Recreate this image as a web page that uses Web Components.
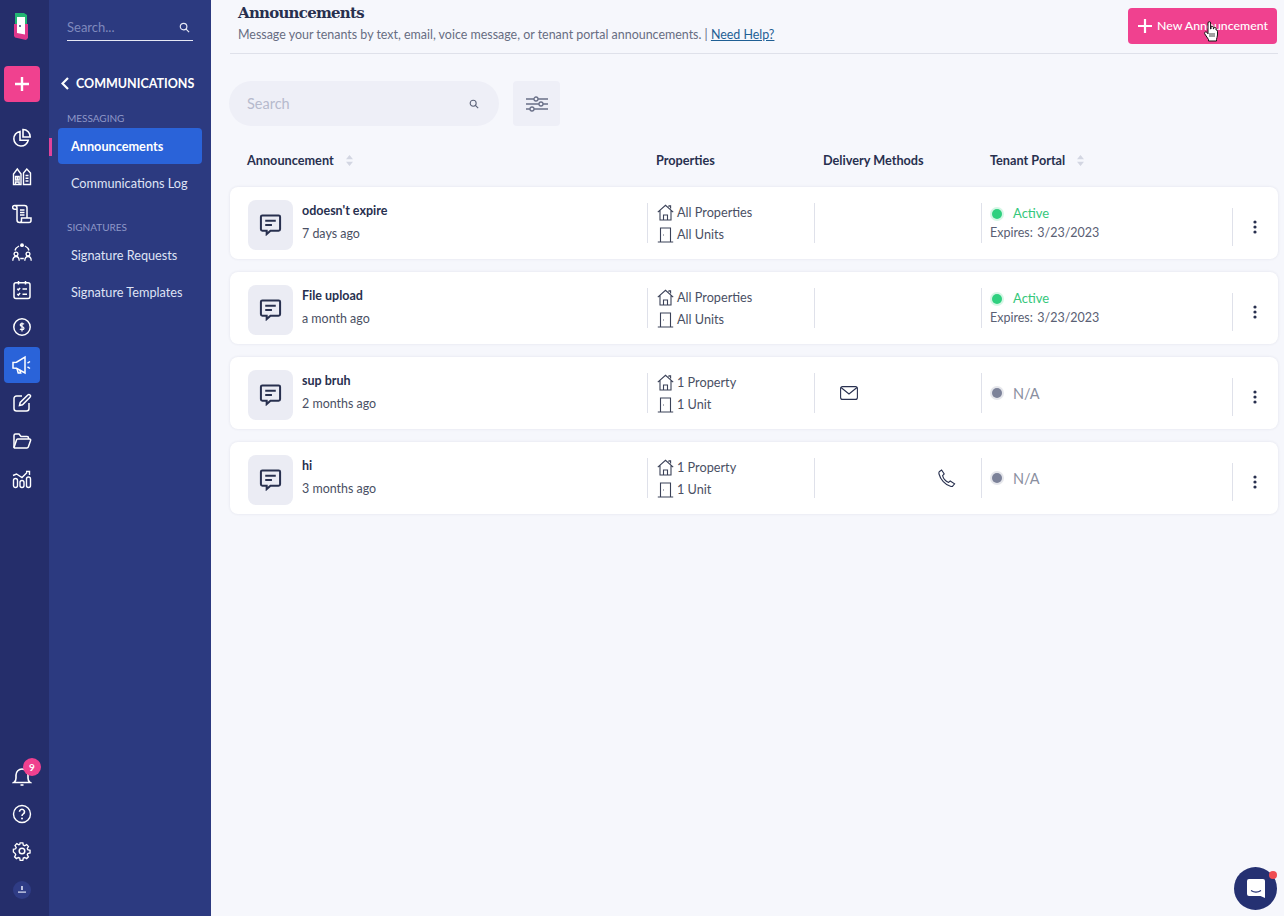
<!DOCTYPE html>
<html>
<head>
<meta charset="utf-8">
<title>Announcements</title>
<style>
  html, body { margin: 0; height: 100%; }
  body { font-family: Lato, "Noto Sans", sans-serif; background: #f6f7fc; overflow: hidden; }
  svg { display: block; }
  a { color: #1f5f94; }
</style>
</head>
<body>
<app-shell>
  <icon-rail slot="rail">
    <rail-item><svg width="20" height="20" viewBox="0 0 20 20" fill="none" stroke="#fff" stroke-width="1.600"><path d="M8 3.500a7.300 7.300 0 1 0 8.300 8.700H8z"/><path d="M11 1.500a7.200 7.200 0 0 1 7.200 7.500H11z"/></svg></rail-item>
    <rail-item><svg width="20" height="20" viewBox="0 0 20 20" fill="none" stroke="#fff" stroke-width="1.400"><path d="M1.500 18.500V8L5.300 3 9 8v10.500z"/><path d="M11.500 18.500V7l3.300-4L18.500 7v11.500z"/><path d="M3.500 10.500h3.600v3.500H3.500zM5.300 10.500V14M3.500 18v-2h3.600v2M13.500 9.500h3M13.500 12.200h3M13.500 15h3"/></svg></rail-item>
    <rail-item><svg width="20" height="20" viewBox="0 0 20 20" fill="none" stroke="#fff" stroke-width="1.500"><path d="M2.500 1.500h10A2.500 2.500 0 0 1 15 4v9.500M2.500 1.500A1.800 1.800 0 0 0 2.500 5.200H5V16a2.500 2.500 0 0 0 2.500 2.500H17a2 2 0 0 0 2-2V14H9.500v2.500a2 2 0 0 1-2 2M2.500 1.500A2.500 2.500 0 0 1 5 4v1.200"/><path d="M8 6h4.500M8 8.500h4.500M8 11h4.500"/></svg></rail-item>
    <rail-item><svg width="20" height="20" viewBox="0 0 20 20" fill="none" stroke="#fff" stroke-width="1.300"><circle cx="10" cy="3.200" r="1.900" fill="#fff" stroke="none"/><circle cx="4" cy="12" r="1.900"/><circle cx="16" cy="12" r="1.900"/><path d="M.8 18.800c0-3 1.500-4.300 3.200-4.300s3.200 1.300 3.200 4.300M12.800 18.800c0-3 1.500-4.300 3.200-4.300s3.200 1.300 3.200 4.300M8.200 16.500h3.600M3 8.500c.5-2 2-3.500 4-4.500M17 8.500c-.5-2-2-3.500-4-4.500"/></svg></rail-item>
    <rail-item><svg width="20" height="20" viewBox="0 0 20 20" fill="none" stroke="#fff" stroke-width="1.500"><rect x="2" y="2.800" width="16" height="15.700" rx="2"/><path d="M6.500 1v3.500M13.500 1v3.500M5.300 8.800l1.100 1.100 1.700-2M10.500 9h4.500M5.300 14l1.100 1.100 1.700-2M10.500 14.300h4.500"/></svg></rail-item>
    <rail-item><svg width="20" height="20" viewBox="0 0 20 20" fill="none" stroke="#fff" stroke-width="1.500"><circle cx="10" cy="10" r="8.200"/><path d="M12 7.300c-.5-.8-3.800-1.200-3.800.7 0 1.900 3.800 1.200 3.800 3.200 0 1.800-3.300 1.600-4 .6M10 5.500v9" stroke-width="1.200"/></svg></rail-item>
    <rail-item active><svg width="20" height="20" viewBox="0 0 20 20" fill="none" stroke="#fff" stroke-width="1.500"><path d="M1 7.500v5.500l3.500.3L13 18V2L4.500 7.200z"/><path d="M5 13.500l1.200 4.500h2.500l-1-3.200M15.500 8.200l2.500-1.700M15.500 11.800l2.500 1.700"/></svg></rail-item>
    <rail-item><svg width="20" height="20" viewBox="0 0 20 20" fill="none" stroke="#fff" stroke-width="1.500"><path d="M10 3H4.500A2.500 2.500 0 0 0 2 5.500v10A2.500 2.500 0 0 0 4.500 18h10a2.500 2.500 0 0 0 2.500-2.500V10"/><path d="M7.500 12.500l.7-3L15.800 2a1.400 1.400 0 0 1 2.200 2.200l-7.500 7.600z"/></svg></rail-item>
    <rail-item><svg width="20" height="20" viewBox="0 0 20 20" fill="none" stroke="#fff" stroke-width="1.500"><path d="M2 16.500V4.500A1.500 1.500 0 0 1 3.500 3h3.500l2 2.500h6a1.500 1.500 0 0 1 1.500 1.500v1"/><path d="M2 16.500L4.500 9A1.200 1.200 0 0 1 5.700 8H17.500a1.200 1.200 0 0 1 1.100 1.600L16.300 16a1.500 1.500 0 0 1-1.400 1H2.500z"/></svg></rail-item>
    <rail-item><svg width="20" height="20" viewBox="0 0 20 20" fill="none" stroke="#fff" stroke-width="1.400"><rect x="1.500" y="9.500" width="4" height="9" rx="2"/><rect x="8" y="11.500" width="4" height="7" rx="2"/><rect x="14.500" y="8" width="4" height="10.500" rx="2"/><path d="M1 6.500l3.500-1.500L10 8.500l5-5M14 2.500h3.500V6"/></svg></rail-item>
    <rail-item slot="bottom" badge="9"><svg width="20" height="20" viewBox="0 0 20 20" fill="none" stroke="#fff" stroke-width="1.600"><path d="M2 15.500c1.500-1 2-2 2-4.500V8a6 6 0 0 1 12 0v3c0 2.500.5 3.500 2 4.500z"/><path d="M8.500 18h3"/></svg></rail-item>
    <rail-item slot="bottom"><svg width="20" height="20" viewBox="0 0 20 20" fill="none" stroke="#fff" stroke-width="1.400"><circle cx="10" cy="10" r="8.500"/><path d="M7.500 7.800a2.500 2.500 0 1 1 3.800 2.100c-.9.500-1.300 1-1.300 2" stroke-width="1.600"/><circle cx="10" cy="14.400" r="1" fill="#fff" stroke="none"/></svg></rail-item>
    <rail-item slot="bottom"><svg width="20" height="20" viewBox="0 0 20 20" fill="none" stroke="#fff" stroke-width="1.500"><circle cx="10" cy="10" r="2.800"/><path d="M8.500 1.500h3l.5 2.500 1.500.7 2.200-1.300 2 2.200-1.300 2.200.6 1.400 2.500.6v3l-2.500.6-.6 1.400 1.300 2.200-2 2-2.200-1.200-1.500.6-.5 2.500h-3l-.5-2.500-1.500-.6-2.200 1.200-2-2 1.300-2.200-.6-1.400L1 11.700v-3l2.500-.6.600-1.400-1.300-2.200 2-2.200L7 3.600l1-.3z" transform="translate(.5 .5) scale(.9)"/></svg></rail-item>
    <rail-avatar slot="bottom"></rail-avatar>
  </icon-rail>

  <side-nav slot="nav">
    <nav-label>MESSAGING</nav-label>
    <nav-link active>Announcements</nav-link>
    <nav-link>Communications Log</nav-link>
    <nav-label second>SIGNATURES</nav-label>
    <nav-link>Signature Requests</nav-link>
    <nav-link>Signature Templates</nav-link>
  </side-nav>

  <page-header>
    <span slot="title">Announcements</span>
    <span slot="sub">Message your tenants by text, email, voice message, or tenant portal announcements. | <a href="#">Need Help?</a></span>
    <span slot="action">New Announcement</span>
  </page-header>
  <list-toolbar></list-toolbar>
  <table-head></table-head>
  <announcement-list>
    <announcement-row name="odoesn't expire" age="7 days ago" props="All Properties" units="All Units" status="active" expires="3/23/2023"></announcement-row>
    <announcement-row name="File upload" age="a month ago" props="All Properties" units="All Units" status="active" expires="3/23/2023"></announcement-row>
    <announcement-row name="sup bruh" age="2 months ago" props="1 Property" units="1 Unit" delivery="email"></announcement-row>
    <announcement-row name="hi" age="3 months ago" props="1 Property" units="1 Unit" delivery="phone"></announcement-row>
  </announcement-list>
</app-shell>
<chat-launcher></chat-launcher>
<hand-cursor></hand-cursor>

<script>
const searchIcon = (size, color) => `<svg width="${size}" height="${size}" viewBox="0 0 12 12" fill="none" stroke="${color}" stroke-width="1.300"><circle cx="5" cy="5" r="3.600"/><path d="M7.700 7.700L11 11"/></svg>`;

class AppShell extends HTMLElement {
  constructor() {
    super();
    this.attachShadow({mode: "open"}).innerHTML = `
      <style>
        :host { display: flex; height: 916px; width: 1284px; color: #1f2740; }
        main { flex: 1; min-width: 0; padding: 0 6px 0 19px; }
      </style>
      <slot name="rail"></slot>
      <slot name="nav"></slot>
      <main><slot></slot></main>`;
  }
}

class IconRail extends HTMLElement {
  constructor() {
    super();
    this.attachShadow({mode: "open"}).innerHTML = `
      <style>
        :host { display: flex; flex-direction: column; align-items: flex-start; box-sizing: border-box;
          width: 49px; height: 100%; background: #252e6b; padding: 12px 5px 17px 4px; }
        .logo { margin-left: 10px; }
        .plus { width: 36px; height: 36px; border-radius: 4px; background: #f0418f; display: flex;
          align-items: center; justify-content: center; margin: 26px 0 18px; }
        .items { display: flex; flex-direction: column; gap: 1.900px; }
        .bottom { margin-top: auto; display: flex; flex-direction: column; gap: 1px; align-items: center; }
      </style>
      <svg class="logo" width="14" height="28" viewBox="0 0 14 28">
        <path d="M1 1h9l3 2v12H1z" fill="#23b573"/>
        <path d="M0 12h14v14l-2 2L1 25.500 0 24z" fill="#e0378c"/>
        <path d="M3 5h8v17.500L3 21z" fill="#fff"/>
        <circle cx="6" cy="14" r=".9" fill="#252e6b"/>
      </svg>
      <div class="plus"><svg width="16" height="16" viewBox="0 0 16 16" stroke="#fff" stroke-width="2.400"><path d="M8 1v14M1 8h14"/></svg></div>
      <div class="items"><slot></slot></div>
      <div class="bottom"><slot name="bottom"></slot></div>`;
  }
}

class RailItem extends HTMLElement {
  constructor() {
    super();
    const badge = this.getAttribute("badge");
    this.attachShadow({mode: "open"}).innerHTML = `
      <style>
        :host { display: flex; position: relative; align-items: center; justify-content: center;
          width: 36px; height: 36px; border-radius: 4px; }
        :host([active]) { background: #2a63d9; }
        i { position: absolute; top: -1px; right: -1px; width: 18px; height: 18px; border-radius: 50%;
          background: #f0418f; color: #fff; font: 700 10px/18px Lato, sans-serif; font-style: normal; text-align: center; }
      </style>
      <slot></slot>${badge ? `<i>${badge}</i>` : ""}`;
  }
}

class RailAvatar extends HTMLElement {
  constructor() {
    super();
    this.attachShadow({mode: "open"}).innerHTML = `
      <style>
        :host { display: flex; align-items: center; justify-content: center; width: 18px; height: 18px;
          margin-top: 11px; border-radius: 50%; background: #2f3c85; }
      </style>
      <svg width="10" height="10" viewBox="0 0 10 10" fill="#dfe3f5"><rect x="4.200" y="1" width="1.600" height="4"/><rect x="1" y="6.500" width="8" height="1.200"/></svg>`;
  }
}

class SideNav extends HTMLElement {
  constructor() {
    super();
    this.attachShadow({mode: "open"}).innerHTML = `
      <style>
        :host { display: block; box-sizing: border-box; width: 162px; height: 100%; background: #2c3a80;
          padding: 0 9px; color: #fff; }
        .search { display: flex; align-items: center; justify-content: space-between; margin: 0 9px 0 9px;
          height: 41px; padding: 14px 3px 0 0; box-sizing: border-box; border-bottom: 1px solid #e6e8f5; }
        .search span { font-size: 13px; color: #7f89bd; }
        .back { display: flex; align-items: center; gap: 7px; margin: 33px 0 0 3px; height: 18px;
          font-size: 12.500px; font-weight: 700; white-space: nowrap; }
      </style>
      <div class="search"><span>Search...</span>${searchIcon(11, "#e6e8f5")}</div>
      <div class="back"><svg width="8" height="13" viewBox="0 0 8 13" fill="none" stroke="#fff" stroke-width="2.200"><path d="M7 1L1.500 6.500 7 12"/></svg>COMMUNICATIONS</div>
      <slot></slot>`;
  }
}

class NavLabel extends HTMLElement {
  constructor() {
    super();
    this.attachShadow({mode: "open"}).innerHTML = `
      <style>
        :host { display: block; margin: 19px 0 0 9px; height: 15px; line-height: 15px; font-size: 10px; color: #8f98c8; }
        :host([second]) { margin-top: 18px; margin-bottom: 2px; }
      </style>
      <slot></slot>`;
  }
}

class NavLink extends HTMLElement {
  constructor() {
    super();
    this.attachShadow({mode: "open"}).innerHTML = `
      <style>
        :host { display: block; position: relative; height: 37px; line-height: 37px; padding-left: 13px;
          font-size: 12.700px; color: #dfe3f5; border-radius: 4px; white-space: nowrap; }
        :host([active]) { background: #2a63d9; color: #fff; font-weight: 700; height: 36px; margin: 2px 0 1px; }
        :host([active])::before { content: ""; position: absolute; left: -9px; top: 10px; width: 3px; height: 18px; background: #e0439b; }
      </style>
      <slot></slot>`;
  }
}

class PageHeader extends HTMLElement {
  constructor() {
    super();
    this.attachShadow({mode: "open"}).innerHTML = `
      <style>
        :host { display: flex; justify-content: space-between; height: 54px; box-sizing: border-box;
          border-bottom: 1px solid #dfe1ea; padding-left: 8px; }
        h1 { margin: 4px 0 0; font: 700 15px/18px "DejaVu Serif", serif; letter-spacing: -.75px; color: #28304f; }
        p { margin: 4px 0 0; font-size: 12.450px; line-height: 17px; color: #676d82; }
        button { align-self: flex-start; display: flex; align-items: center; gap: 5px; box-sizing: border-box;
          width: 149px; height: 36px; margin: 8px 1px 0 0; padding: 0 0 0 10px; border: 0; border-radius: 4px;
          background: #f0418f; color: #fff; font: 500 12.300px Lato, sans-serif; white-space: nowrap; }
        button ::slotted(span) { margin-top: -2px; }
      </style>
      <div>
        <h1><slot name="title"></slot></h1>
        <p><slot name="sub"></slot></p>
      </div>
      <button><svg width="14" height="14" viewBox="0 0 14 14" stroke="#fff" stroke-width="2.200"><path d="M7 0v14M0 7h14"/></svg><slot name="action"></slot></button>`;
  }
}

class ListToolbar extends HTMLElement {
  constructor() {
    super();
    this.attachShadow({mode: "open"}).innerHTML = `
      <style>
        :host { display: flex; gap: 14px; margin: 27px 0 0 -1px; }
        .search { display: flex; align-items: center; justify-content: space-between; box-sizing: border-box;
          width: 270px; height: 45px; padding: 0 20px 0 18px; border-radius: 23px; background: #eeeff7;
          font-size: 14.500px; color: #b6bacd; }
        .filter { display: flex; align-items: center; justify-content: center; width: 47px; height: 45px;
          border-radius: 4px; background: #eeeff7; }
      </style>
      <div class="search"><span>Search</span>${searchIcon(10, "#5c6379")}</div>
      <div class="filter"><svg width="24" height="16" viewBox="0 0 24 16" fill="none" stroke="#6a7088" stroke-width="1.300"><path d="M1 3h8M13 3h10M1 8h13M18 8h5M1 13h4M9 13h14"/><circle cx="11" cy="3" r="2"/><circle cx="16" cy="8" r="2"/><circle cx="7" cy="13" r="2"/></svg></div>`;
  }
}

const sortIcon = `<svg width="9" height="13" viewBox="0 0 9 13" fill="#d3d6e2"><path d="M4.500 1L8 5.300H1zM4.500 12L1 7.700h7z"/></svg>`;

class TableHead extends HTMLElement {
  constructor() {
    super();
    this.attachShadow({mode: "open"}).innerHTML = `
      <style>
        :host { display: grid; grid-template-columns: 409px 167px 167px 1fr; margin: 24px 0 0 17px; height: 20px;
          align-items: center; font-size: 12.700px; font-weight: 700; color: #28304f; }
        div { display: flex; align-items: center; gap: 11px; white-space: nowrap; }
      </style>
      <div>Announcement ${sortIcon}</div>
      <div>Properties</div>
      <div>Delivery Methods</div>
      <div>Tenant Portal ${sortIcon}</div>`;
  }
}

class AnnouncementList extends HTMLElement {
  constructor() {
    super();
    this.attachShadow({mode: "open"}).innerHTML = `
      <style>:host { display: flex; flex-direction: column; gap: 13px; margin: 17px 0 0 0; }</style>
      <slot></slot>`;
  }
}

const deliveryIcons = {
  email: `<svg width="18" height="14" viewBox="0 0 18 14" fill="none" stroke="#28304f" stroke-width="1.100"><rect x=".6" y=".6" width="16.800" height="12.800" rx="2"/><path d="M1 1.500l8 6.500 8-6.500"/></svg>`,
  phone: `<svg width="18" height="18" viewBox="0 0 18 18" fill="none" stroke="#28304f" stroke-width="1.100"><path d="M1.200 2.800L3.600 1l2.600 4-1.600 1.600c.6 2.600 3.200 5.600 6 6.800l1.600-1.400 4.400 2.800-1.800 2.200c-.5.500-1.400.6-2.400.3C7.200 15.800 2.400 10.500 1 5c-.2-.9-.2-1.700.2-2.200z"/></svg>`
};

class AnnouncementRow extends HTMLElement {
  connectedCallback() {
    const a = name => this.getAttribute(name) || "";
    const delivery = a("delivery");
    const active = a("status") === "active";
    this.attachShadow({mode: "open"}).innerHTML = `
      <style>
        :host { display: grid; grid-template-columns: 417px 167px 167px 251px 1fr; height: 72px; box-sizing: border-box;
          background: #fff; border-radius: 8px; box-shadow: 0 0 3px rgba(40,48,90,.1); font-size: 12.700px; color: #4a5064; }
        .main { display: flex; align-items: center; gap: 9px; padding-left: 18px; }
        .tile { width: 45px; height: 50px; border-radius: 8px; background: #ebecf4; display: flex; align-items: center; justify-content: center; }
        .text { padding-bottom: 5px; }
        .main b { display: block; font-weight: 700; color: #28304f; line-height: 17px; margin-bottom: 6px; font-size: 12.500px; }
        .main span { display: block; line-height: 17px; font-size: 12.450px; }
        .cell { margin: 16px 0 19px; border-left: 1px solid #dfe1ea; }
        .props { display: flex; flex-direction: column; justify-content: center; gap: 4px; padding-left: 9px; }
        .props div { display: flex; align-items: center; gap: 3px; height: 18px; white-space: nowrap; }
        .delivery { display: flex; align-items: center; padding-left: ${delivery === "phone" ? 123 : 25}px; }
        .portal { display: flex; flex-direction: column; justify-content: center; padding-left: 9px; gap: 2px; }
        .status { display: flex; align-items: center; gap: 11px; color: ${active ? "#34c77b" : "#8a8f9f"}; font-size: ${active ? 13 : 14.500}px; line-height: 17px; }
        .status i { width: 10px; height: 10px; border-radius: 50%; margin-left: 1px; background: ${active ? "#2fd07f" : "#7c8299"};
          box-shadow: 0 0 0 2px ${active ? "rgba(47,208,127,.2)" : "rgba(124,130,153,.2)"}; }
        .expires { line-height: 17px; white-space: nowrap; margin-left: -1px; color: #5a6074; font-size: 12.500px; word-spacing: -1px; }
        .more { margin: 21px 0 16px; border-left: 1px solid #dfe1ea; display: flex; align-items: center; justify-content: center; padding-right: 1px; }
      </style>
      <div class="main">
        <div class="tile"><svg width="23" height="23" viewBox="0 0 24 24" fill="none" stroke="#28304f" stroke-width="2.100" style="margin:-1px 1px 0 0"><path d="M3.500 2.500h17a1.500 1.500 0 0 1 1.500 1.500v13a1.500 1.500 0 0 1-1.500 1.500H12L8 22v-3.500H3.500A1.500 1.500 0 0 1 2 17V4a1.500 1.500 0 0 1 1.500-1.500z"/><path d="M6.500 8h11M6.500 12.500h7"/></svg></div>
        <div class="text"><b>${a("name")}</b><span>${a("age")}</span></div>
      </div>
      <div class="cell props">
        <div><svg width="17" height="17" viewBox="0 0 17 17" fill="none" stroke="#3b4258" stroke-width="1.100"><path d="M.8 8.200L8.500 1.300l7.700 6.900M3 6.500V16h11V6.500M6.500 16v-5h4v5M12 3V1.800h1.600v2.700"/></svg>${a("props")}</div>
        <div><svg width="17" height="17" viewBox="0 0 17 17" fill="none" stroke="#3b4258" stroke-width="1.100"><path d="M.8 16h15.400M3.500 16V2h10v14"/><path d="M6 9h.8"/></svg>${a("units")}</div>
      </div>
      <div class="cell delivery">${deliveryIcons[delivery] || ""}</div>
      <div class="cell portal">
        <div class="status"><i></i>${active ? "Active" : "N/A"}</div>
        ${active ? `<div class="expires">Expires:&nbsp; ${a("expires")}</div>` : ""}
      </div>
      <div class="more"><svg width="4" height="14" viewBox="0 0 4 14" fill="#28304f"><circle cx="2" cy="2" r="1.600"/><circle cx="2" cy="7" r="1.600"/><circle cx="2" cy="12" r="1.600"/></svg></div>`;
  }
}

class ChatLauncher extends HTMLElement {
  constructor() {
    super();
    this.attachShadow({mode: "open"}).innerHTML = `
      <style>
        :host { position: fixed; left: 1234px; top: 867px; width: 43px; height: 43px; border-radius: 50%;
          background: #253172; display: flex; align-items: center; justify-content: center; }
        i { position: absolute; top: 4px; right: 0; width: 8px; height: 8px; border-radius: 50%; background: #f04d52; }
      </style>
      <svg width="20" height="22" viewBox="0 0 20 22"><path d="M3 1h14a2 2 0 0 1 2 2v17l-4.500-2H3a2 2 0 0 1-2-2V3a2 2 0 0 1 2-2z" fill="#fff"/><path d="M5 12.500c3 2 7 2 10 0" fill="none" stroke="#253172" stroke-width="1.200"/></svg>
      <i></i>`;
  }
}

class HandCursor extends HTMLElement {
  constructor() {
    super();
    this.attachShadow({mode: "open"}).innerHTML = `
      <style>:host { position: fixed; left: 1204px; top: 21px; }</style>
      <svg width="14" height="21" viewBox="0 0 14 21"><path d="M4 2a1.300 1.300 0 0 1 2.600 0v6h.4V6.500a1.200 1.200 0 0 1 2.400 0V8h.3V7.200a1.200 1.200 0 0 1 2.300 0V9h.2a1.200 1.200 0 0 1 1.300 1.200V14c0 2-1 3-1 4.500v1.500H4.500v-1.500L.8 13c-.9-1.500.9-3 2.200-1.500l1 1.300z" fill="#fff" stroke="#111" stroke-width="1"/><path d="M6 12v4M8 12v4M10 12v4" stroke="#111" stroke-width=".8"/></svg>`;
  }
}

customElements.define("app-shell", AppShell);
customElements.define("icon-rail", IconRail);
customElements.define("rail-item", RailItem);
customElements.define("rail-avatar", RailAvatar);
customElements.define("side-nav", SideNav);
customElements.define("nav-label", NavLabel);
customElements.define("nav-link", NavLink);
customElements.define("page-header", PageHeader);
customElements.define("list-toolbar", ListToolbar);
customElements.define("table-head", TableHead);
customElements.define("announcement-list", AnnouncementList);
customElements.define("announcement-row", AnnouncementRow);
customElements.define("chat-launcher", ChatLauncher);
customElements.define("hand-cursor", HandCursor);
</script>
</body>
</html>
